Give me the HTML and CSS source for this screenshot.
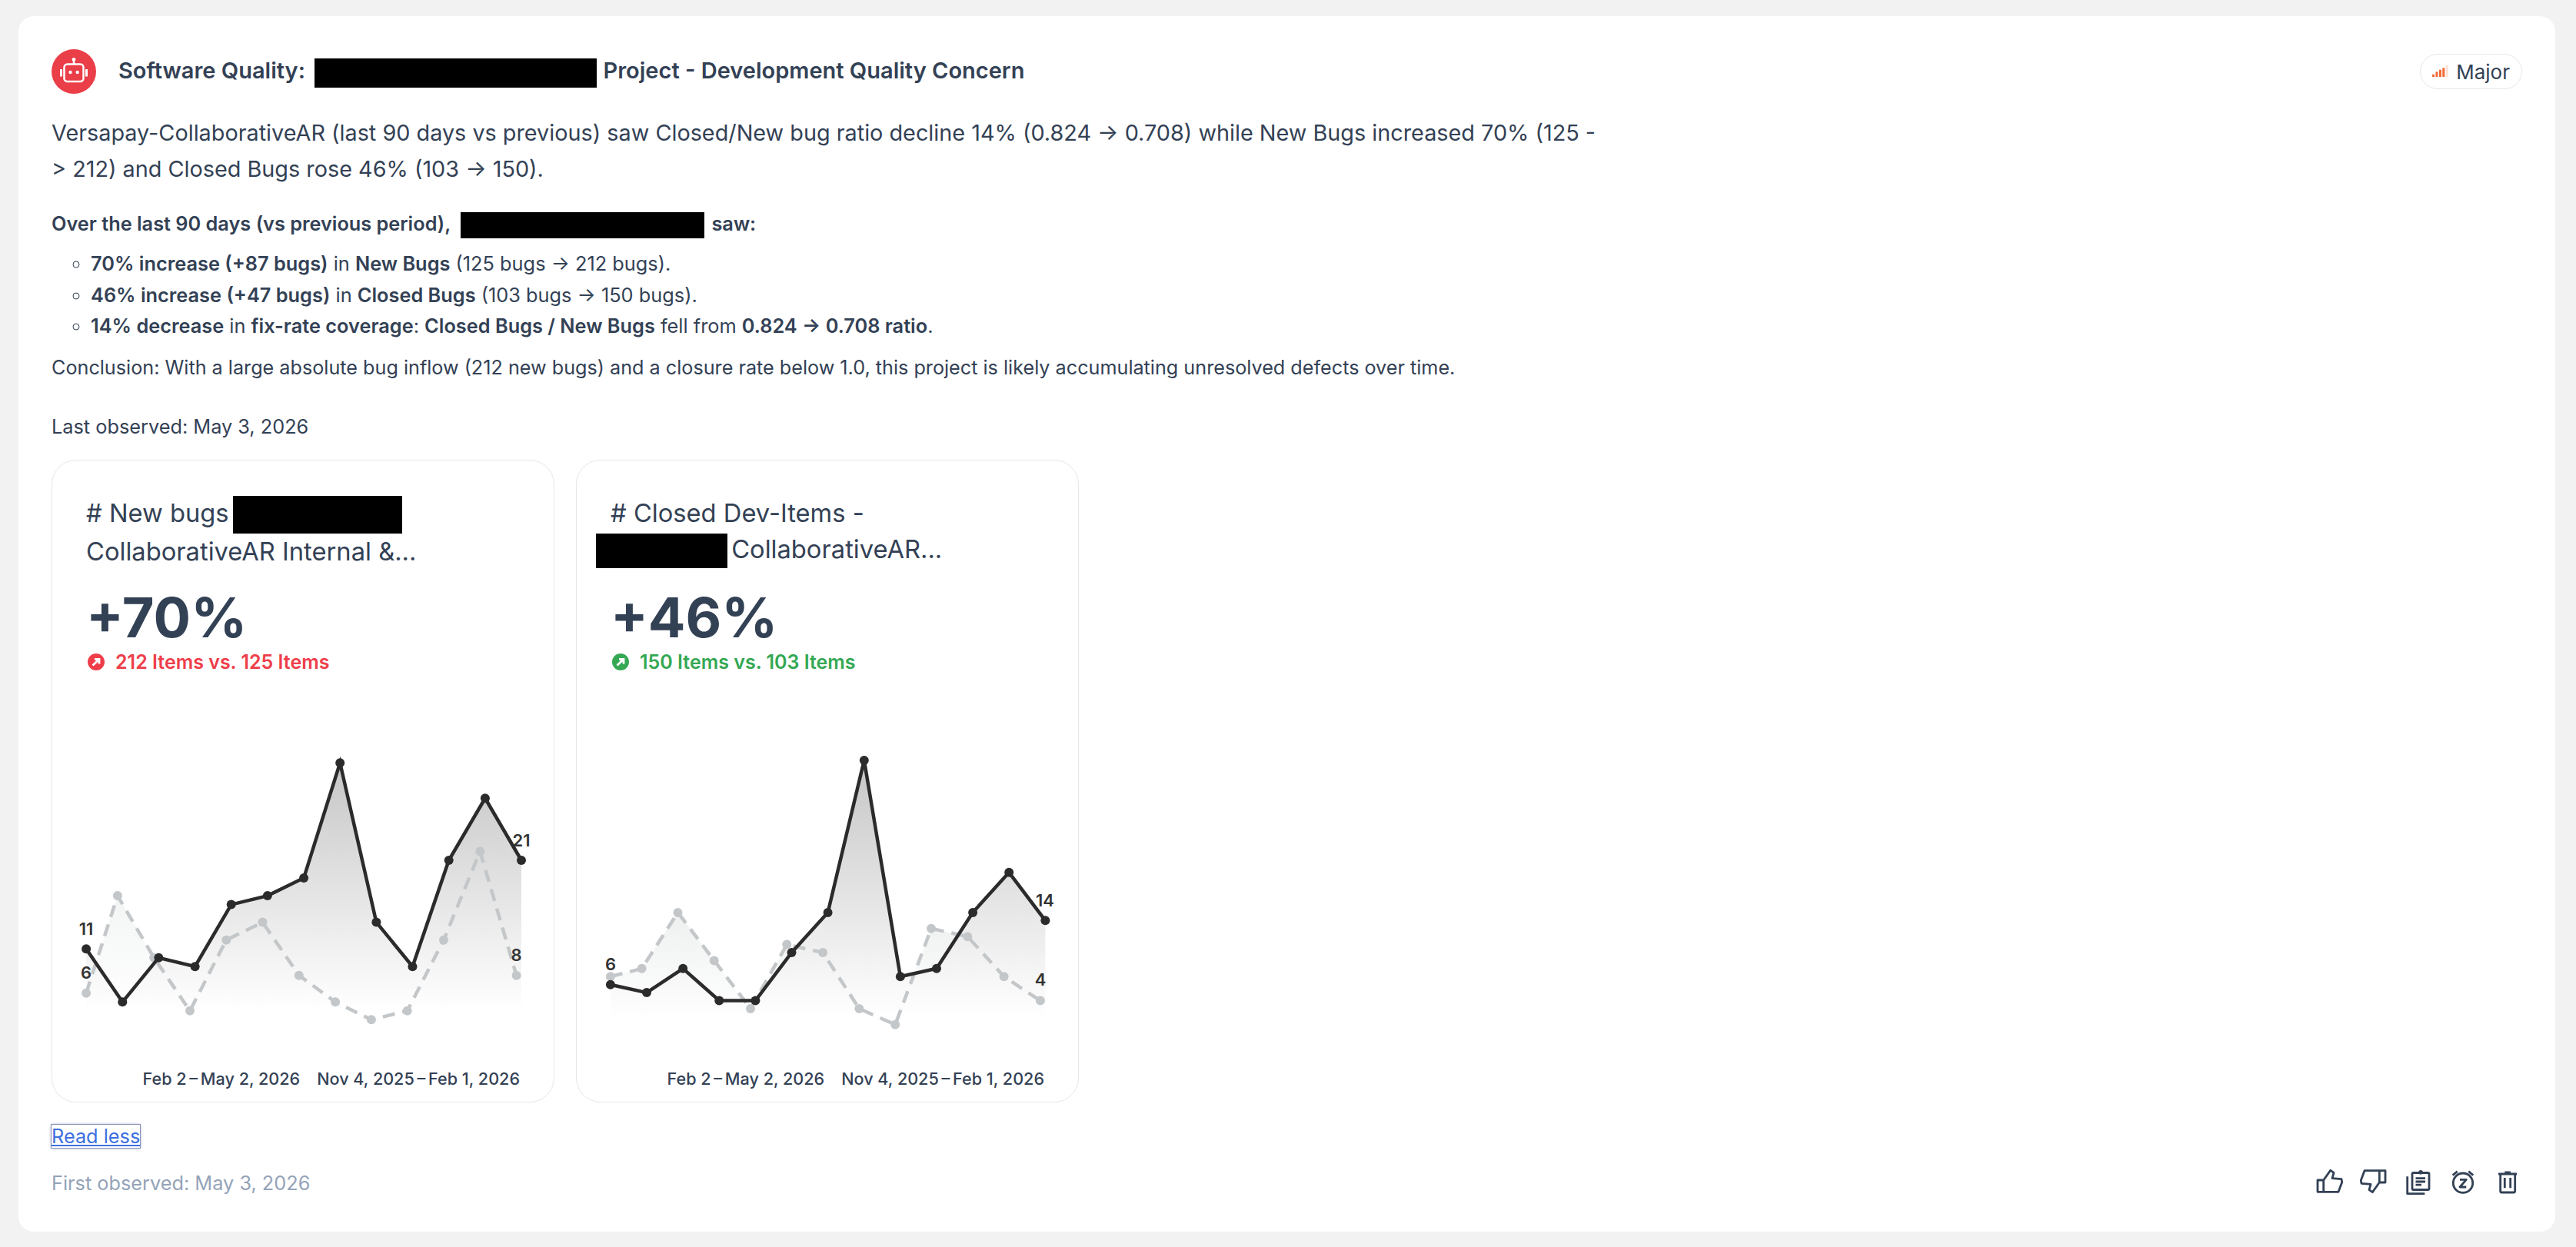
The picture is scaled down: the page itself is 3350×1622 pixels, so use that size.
FILE: index.html
```html
<!DOCTYPE html>
<html lang="en">
<head>
    <meta charset="UTF-8">
    <title>Insight</title>
    <link rel="stylesheet" href="styles.css">
</head>
<body>
    <div class="insight">
        <div class="header">
            <span class="avatar">
                <svg width="58" height="58" viewBox="0 0 58 58" fill="none" stroke="#fff" stroke-width="2.5">
                    <rect x="16.5" y="19.5" width="25" height="22.5" rx="4"/>
                    <path d="M29 14v5"/>
                    <circle cx="29" cy="13.5" r="2.4" fill="#fff" stroke="none"/>
                    <circle cx="24.5" cy="30" r="2.2" fill="#fff" stroke="none"/>
                    <circle cx="33.7" cy="30" r="2.2" fill="#fff" stroke="none"/>
                    <path d="M12.5 26v9.5M45.5 26v9.5" stroke-width="3"/>
                </svg>
            </span>
            <h1 class="title">Software Quality: <span class="redact redact-title"></span> Project - Development Quality Concern</h1>
            <span class="badge">
                <svg width="21" height="16" viewBox="0 0 21 16">
                    <rect x="0" y="11.7" width="3" height="3.3" fill="#f26b3a"/>
                    <rect x="4.5" y="8.3" width="3" height="6.7" fill="#f26b3a"/>
                    <rect x="9" y="5.7" width="3" height="9.3" fill="#f26b3a"/>
                    <rect x="13.3" y="3.3" width="3" height="11.7" fill="#f26b3a"/>
                    <rect x="17.7" y="0" width="3" height="15" fill="#fde0d4"/>
                </svg>
                Major
            </span>
        </div>

        <p class="summary">Versapay-CollaborativeAR (last 90 days vs previous) saw Closed/New bug ratio decline 14% (0.824 → 0.708) while New Bugs increased 70% (125 -<wbr>&gt; 212) and Closed Bugs rose 46% (103 → 150).</p>

        <p class="intro"><strong>Over the last 90 days (vs previous period), <span class="redact redact-intro"></span> saw:</strong></p>
        <ul class="points">
            <li><strong>70% increase (+87 bugs)</strong> in <strong>New Bugs</strong> (125 bugs → 212 bugs).</li>
            <li><strong>46% increase (+47 bugs)</strong> in <strong>Closed Bugs</strong> (103 bugs → 150 bugs).</li>
            <li><strong>14% decrease</strong> in <strong>fix-rate coverage</strong>: <strong>Closed Bugs / New Bugs</strong> fell from <strong>0.824 → 0.708 ratio</strong>.</li>
        </ul>
        <p class="conclusion">Conclusion: With a large absolute bug inflow (212 new bugs) and a closure rate below 1.0, this project is likely accumulating unresolved defects over time.</p>
        <p class="last-seen">Last observed: May 3, 2026</p>

        <div class="charts">
            <div class="chart-card">
                <div class="chart-head">
                    <div class="chart-title"># New bugs <span class="redact redact-a"></span><br>CollaborativeAR Internal &amp;...</div>
                    <div class="big-number">+70%</div>
                    <div class="delta delta-red">
                        <svg width="22" height="22" viewBox="0 0 22 22">
                            <circle cx="11" cy="11" r="11" fill="#ef3e4a"/>
                            <path d="M6.5 15.5L15 7.5M9 7.5h6v6" fill="none" stroke="#fff" stroke-width="2.8"/>
                        </svg>
                        212 Items vs. 125 Items
                    </div>
                </div>
                <svg class="plot" width="653" height="420" viewBox="0 2 653 420">
                    <defs>
                        <linearGradient id="fillA" gradientUnits="userSpaceOnUse" x1="0" y1="34" x2="0" y2="356">
                            <stop offset="0" stop-color="#c6c6c6"/>
                            <stop offset="1" stop-color="#fff"/>
                        </linearGradient>
                        <linearGradient id="fillLightA" gradientUnits="userSpaceOnUse" x1="0" y1="150" x2="0" y2="356">
                            <stop offset="0" stop-color="#eef0f0"/>
                            <stop offset="1" stop-color="#fff"/>
                        </linearGradient>
                    </defs>
                    <polygon fill="url(#fillLightA)" points="44.1,356 44.1,333.8 84.9,207.1 132.2,287.7 179,356.8 226.3,264.7 273.5,241.6 320.8,310.7 368.1,345.3 414.9,368.3 461.7,356.8 509,264.7 556.3,149.5 603.6,310.7 603.6,356"/>
                    <polygon fill="url(#fillA)" points="44.1,356 44.1,276.2 91.3,345.3 138.4,287.7 185.6,299.2 232.7,218.6 279.9,207.1 327.1,184 374.2,34.3 421.4,241.6 468.5,299.2 515.7,161 562.9,80.3 610,161 610,356"/>
                    <g class="light">
                        <polyline points="44.1,333.8 84.9,207.1 132.2,287.7 179,356.8 226.3,264.7 273.5,241.6 320.8,310.7 368.1,345.3 414.9,368.3 461.7,356.8 509,264.7 556.3,149.5 603.6,310.7"/>
                        <circle cx="44.1" cy="333.8" r="6"/><circle cx="84.9" cy="207.1" r="6"/><circle cx="132.2" cy="287.7" r="6"/><circle cx="179" cy="356.8" r="6"/><circle cx="226.3" cy="264.7" r="6"/><circle cx="273.5" cy="241.6" r="6"/><circle cx="320.8" cy="310.7" r="6"/><circle cx="368.1" cy="345.3" r="6"/><circle cx="414.9" cy="368.3" r="6"/><circle cx="461.7" cy="356.8" r="6"/><circle cx="509" cy="264.7" r="6"/><circle cx="556.3" cy="149.5" r="6"/><circle cx="603.6" cy="310.7" r="6"/>
                    </g>
                    <g class="dark">
                        <polyline points="44.1,276.2 91.3,345.3 138.4,287.7 185.6,299.2 232.7,218.6 279.9,207.1 327.1,184 374.2,34.3 421.4,241.6 468.5,299.2 515.7,161 562.9,80.3 610,161"/>
                        <circle cx="44.1" cy="276.2" r="6"/><circle cx="91.3" cy="345.3" r="6"/><circle cx="138.4" cy="287.7" r="6"/><circle cx="185.6" cy="299.2" r="6"/><circle cx="232.7" cy="218.6" r="6"/><circle cx="279.9" cy="207.1" r="6"/><circle cx="327.1" cy="184" r="6"/><circle cx="374.2" cy="34.3" r="6"/><circle cx="421.4" cy="241.6" r="6"/><circle cx="468.5" cy="299.2" r="6"/><circle cx="515.7" cy="161" r="6"/><circle cx="562.9" cy="80.3" r="6"/><circle cx="610" cy="161" r="6"/>
                    </g>
                    <g class="labels">
                        <text x="44" y="258">11</text>
                        <text x="44" y="315">6</text>
                        <text x="610" y="143">21</text>
                        <text x="603.6" y="292">8</text>
                    </g>
                </svg>
                <div class="legend"><span>Feb 2&thinsp;–&thinsp;May 2, 2026</span><span>Nov 4, 2025&thinsp;–&thinsp;Feb 1, 2026</span></div>
            </div>

            <div class="chart-card">
                <div class="chart-head">
                    <div class="chart-title"># Closed Dev-Items -<br><span class="redact redact-b"></span> CollaborativeAR...</div>
                    <div class="big-number">+46%</div>
                    <div class="delta delta-green">
                        <svg width="22" height="22" viewBox="0 0 22 22">
                            <circle cx="11" cy="11" r="11" fill="#34a853"/>
                            <path d="M6.5 15.5L15 7.5M9 7.5h6v6" fill="none" stroke="#fff" stroke-width="2.8"/>
                        </svg>
                        150 Items vs. 103 Items
                    </div>
                </div>
                <svg class="plot" width="653" height="420" viewBox="0 0 653 420">
                    <defs>
                        <linearGradient id="fillB" gradientUnits="userSpaceOnUse" x1="0" y1="29" x2="0" y2="364">
                            <stop offset="0" stop-color="#c6c6c6"/>
                            <stop offset="1" stop-color="#fff"/>
                        </linearGradient>
                        <linearGradient id="fillLightB" gradientUnits="userSpaceOnUse" x1="0" y1="227" x2="0" y2="364">
                            <stop offset="0" stop-color="#eef0f0"/>
                            <stop offset="1" stop-color="#fff"/>
                        </linearGradient>
                    </defs>
                    <polygon fill="url(#fillLightB)" points="43.9,364 43.9,310.3 84.6,299.8 131.5,226.9 178.7,289.4 226,352 273.3,268.6 320.1,279 367.4,352 414.2,372.8 461,247.7 508.3,258.2 555.6,310.3 602.9,341.5 602.9,364"/>
                    <polygon fill="url(#fillB)" points="43.9,364 43.9,320.7 91,331.1 138.2,299.8 185.3,341.5 232.4,341.5 279.5,279 326.6,226.9 373.8,28.9 420.9,310.3 468,299.8 515.1,226.9 562.2,174.8 609.4,237.3 609.4,364"/>
                    <g class="light">
                        <polyline points="43.9,310.3 84.6,299.8 131.5,226.9 178.7,289.4 226,352 273.3,268.6 320.1,279 367.4,352 414.2,372.8 461,247.7 508.3,258.2 555.6,310.3 602.9,341.5"/>
                        <circle cx="43.9" cy="310.3" r="6"/><circle cx="84.6" cy="299.8" r="6"/><circle cx="131.5" cy="226.9" r="6"/><circle cx="178.7" cy="289.4" r="6"/><circle cx="226" cy="352" r="6"/><circle cx="273.3" cy="268.6" r="6"/><circle cx="320.1" cy="279" r="6"/><circle cx="367.4" cy="352" r="6"/><circle cx="414.2" cy="372.8" r="6"/><circle cx="461" cy="247.7" r="6"/><circle cx="508.3" cy="258.2" r="6"/><circle cx="555.6" cy="310.3" r="6"/><circle cx="602.9" cy="341.5" r="6"/>
                    </g>
                    <g class="dark">
                        <polyline points="43.9,320.7 91,331.1 138.2,299.8 185.3,341.5 232.4,341.5 279.5,279 326.6,226.9 373.8,28.9 420.9,310.3 468,299.8 515.1,226.9 562.2,174.8 609.4,237.3"/>
                        <circle cx="43.9" cy="320.7" r="6"/><circle cx="91" cy="331.1" r="6"/><circle cx="138.2" cy="299.8" r="6"/><circle cx="185.3" cy="341.5" r="6"/><circle cx="232.4" cy="341.5" r="6"/><circle cx="279.5" cy="279" r="6"/><circle cx="326.6" cy="226.9" r="6"/><circle cx="373.8" cy="28.9" r="6"/><circle cx="420.9" cy="310.3" r="6"/><circle cx="468" cy="299.8" r="6"/><circle cx="515.1" cy="226.9" r="6"/><circle cx="562.2" cy="174.8" r="6"/><circle cx="609.4" cy="237.3" r="6"/>
                    </g>
                    <g class="labels">
                        <text x="44" y="302">6</text>
                        <text x="609" y="219">14</text>
                        <text x="603" y="322">4</text>
                    </g>
                </svg>
                <div class="legend"><span>Feb 2&thinsp;–&thinsp;May 2, 2026</span><span>Nov 4, 2025&thinsp;–&thinsp;Feb 1, 2026</span></div>
            </div>
        </div>

        <a class="read-less" href="#">Read less</a>

        <div class="footer">
            <span class="first-seen">First observed: May 3, 2026</span>
            <div class="actions">
                <!-- like -->
                <svg width="38" height="38" viewBox="0 0 38 38">
                    <path d="M4 17h7.7L20.7 4.3 25 7.3l-2 7.4 12 1 .7 4-4.7 12.6H4zM11.7 17v15.3"/>
                </svg>
                <!-- dislike -->
                <svg width="38" height="38" viewBox="0 0 38 38">
                    <path transform="rotate(180 19 18.5)" d="M4 17h7.7L20.7 4.3 25 7.3l-2 7.4 12 1 .7 4-4.7 12.6H4zM11.7 17v15.3"/>
                </svg>
                <!-- copy -->
                <svg width="38" height="38" viewBox="0 0 38 38">
                    <rect x="11" y="7.5" width="22" height="22" rx="1.5"/>
                    <path d="M4.7 12.3V34.7h22.6M15.5 14.7h12.5M15.5 19h12.5M15.5 23.2h7.5"/>
                    <circle cx="22" cy="6.7" r="2.8" fill="#334155" stroke="none"/>
                </svg>
                <!-- snooze -->
                <svg width="38" height="38" viewBox="0 0 38 38">
                    <circle cx="19" cy="20.7" r="12.7"/>
                    <path d="M5.7 10.7l6-5M32.3 10.7l-6-5M15 16.3h8.3L15 26h8.3"/>
                </svg>
                <!-- delete -->
                <svg width="38" height="38" viewBox="0 0 38 38">
                    <path d="M7 9h24M9.7 9v22.5a1.5 1.5 0 0 0 1.5 1.5h16a1.5 1.5 0 0 0 1.5-1.5V9M15.3 7h7.7M15.3 14v13.3M22.7 14v13.3"/>
                </svg>
            </div>
        </div>
    </div>
</body>
</html>
```

FILE: styles.css
```css
body {
    margin: 0;
    padding: 21px 27px 20px 24px;
    background-color: #f2f2f2;
    font-family: Inter, "Noto Sans", sans-serif;
    color: #334155;
}
.insight {
    background-color: #fff;
    border-radius: 20px;
    padding: 43px 43px 0 43px;
    height: 1581px;
    box-sizing: border-box;
}
.header {
    display: flex;
    align-items: center;
    height: 58px;
}
.avatar {
    width: 58px;
    height: 58px;
    border-radius: 50%;
    background-color: #ea3e48;
    flex-shrink: 0;
}
.avatar svg {
    display: block;
}
.title {
    margin: 2px 0 0 29px;
    font-size: 29px;
    font-weight: 600;
    flex-grow: 1;
}
.redact {
    display: inline-block;
    background-color: #000;
    vertical-align: middle;
}
.redact-title {
    width: 367px;
    height: 38px;
    margin: 0 1px 0 5px;
}
.redact-intro {
    width: 317px;
    height: 34px;
    margin: 0 3px 0 7px;
}
.redact-a {
    width: 220px;
    height: 49px;
    margin-left: -4px;
}
.redact-b {
    width: 171px;
    height: 45px;
    margin: 0 -4px 0 -19px;
}
.badge {
    display: flex;
    align-items: center;
    gap: 10px;
    height: 46px;
    box-sizing: border-box;
    padding: 0 15px;
    border: 1.5px solid #e5e7eb;
    border-radius: 23px;
    font-size: 26px;
}
.summary {
    margin: 27px 0 0 0;
    max-width: 2012px;
    font-size: 28.8px;
    line-height: 47px;
}
.intro {
    margin: 28px 0 0 0;
    font-size: 25.3px;
    line-height: 40px;
}
strong {
    font-weight: 600;
}
.points {
    margin: 12px 0 0 0;
    padding-left: 51px;
    font-size: 25.35px;
    line-height: 40.5px;
    list-style-type: circle;
}
.conclusion {
    margin: 13px 0 0 0;
    font-size: 25.2px;
    line-height: 40px;
}
.last-seen {
    margin: 37px 0 0 0;
    font-size: 25.3px;
    line-height: 40px;
}
.charts {
    display: flex;
    gap: 28px;
    margin-top: 23px;
}
.chart-card {
    width: 654px;
    box-sizing: border-box;
    padding: 45px 0 15px 0;
    border: 1.5px solid #e5e7eb;
    border-radius: 32px;
}
.chart-head {
    padding: 0 44px;
}
.chart-title {
    font-size: 32.7px;
    line-height: 47px;
    height: 94px;
    white-space: nowrap;
}
.big-number {
    font-size: 72px;
    font-weight: 700;
    line-height: 90px;
    margin-top: 20px;
}
.delta {
    display: flex;
    align-items: center;
    gap: 14px;
    margin: -2px 0 0 2px;
    font-size: 25px;
    font-weight: 600;
    line-height: 30px;
}
.delta-red {
    color: #ef3e4a;
}
.delta-green {
    color: #34a853;
}
.plot {
    display: block;
    margin-top: 84px;
}
.light polyline {
    fill: none;
    stroke: #c4c7c9;
    stroke-width: 4.5;
    stroke-dasharray: 16 10;
}
.light circle {
    fill: #c4c7c9;
}
.dark polyline {
    fill: none;
    stroke: #2b2b2b;
    stroke-width: 4.5;
}
.dark circle {
    fill: #2b2b2b;
}
.labels text {
    font-size: 22px;
    font-weight: 600;
    fill: #333;
    text-anchor: middle;
}
.legend {
    display: flex;
    justify-content: flex-end;
    gap: 22px;
    margin-top: 8px;
    padding-right: 44px;
    font-size: 21.6px;
    font-weight: 500;
    line-height: 30px;
}
.read-less {
    display: inline-block;
    margin-top: 29px;
    color: #3b6fe0;
    font-size: 25.3px;
    line-height: 30px;
    box-shadow: 0 0 0 1px #8a94b8, 0 0 4px #8a94b8;
}
.footer {
    display: flex;
    justify-content: space-between;
    align-items: center;
    margin-top: 25px;
}
.first-seen {
    color: #94a3b8;
    font-size: 25.3px;
    margin-top: 3px;
}
.actions {
    display: flex;
    gap: 20px;
}
.actions svg {
    fill: none;
    stroke: #334155;
    stroke-width: 2.8;
    stroke-linejoin: round;
}
```
